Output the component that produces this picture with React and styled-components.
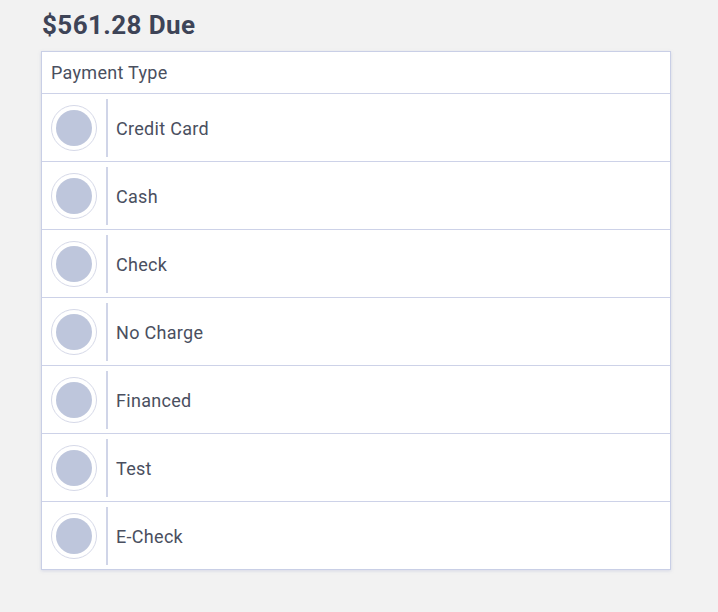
import styled, { createGlobalStyle } from "styled-components";

const GlobalStyle = createGlobalStyle`
  body {
    margin: 0;
    background: #f2f2f2;
    font-family: Roboto, "Liberation Sans", sans-serif;
  }
`;

const Page = styled.div`
  padding: 7px 47px 40px 41px;
`;

const Title = styled.h1`
  margin: 0 0 8px 1px;
  font-size: 26px;
  line-height: 36px;
  font-weight: 700;
  letter-spacing: 0.4px;
  color: #3e4457;
`;

const Table = styled.div`
  background: #fff;
  border: 1px solid #c9cfe6;
  box-shadow: 0 1px 3px rgba(160, 168, 210, 0.35);
`;

const Header = styled.div`
  height: 41px;
  padding-left: 9px;
  display: flex;
  align-items: center;
  font-size: 18px;
  letter-spacing: 0.3px;
  color: #4a4f60;
  border-bottom: 1px solid #cdd2e8;
`;

const Row = styled.label`
  height: 67px;
  display: flex;
  align-items: center;
  border-bottom: ${(p) => (p.$last ? "none" : "1px solid #cdd2e8")};
  cursor: pointer;
`;

const RadioCell = styled.div`
  align-self: stretch;
  display: flex;
  align-items: center;
  padding: 0 9px;
`;

const Radio = styled.span`
  width: 44px;
  height: 44px;
  border-radius: 50%;
  border: 1px solid #d6d9e8;
  background: #fff;
  display: flex;
  align-items: center;
  justify-content: center;
  &::after {
    content: "";
    width: 36px;
    height: 36px;
    border-radius: 50%;
    background: ${(p) => (p.$checked ? "#5b6ea8" : "#bec6dc")};
  }
`;

const Divider = styled.span`
  width: 2px;
  align-self: stretch;
  margin: 5px 0 4px;
  background: #d0d5e8;
`;

const Label = styled.span`
  padding: 1px 0 0 8px;
  font-size: 18px;
  letter-spacing: 0.3px;
  color: #4a4f60;
`;

const types = ["Credit Card", "Cash", "Check", "No Charge", "Financed", "Test", "E-Check"];

export default function App() {
  return (
    <>
      <GlobalStyle />
      <Page>
        <Title>$561.28 Due</Title>
        <Table>
          <Header>Payment Type</Header>
          {types.map((t, i) => (
            <Row key={t} $last={i === types.length - 1}>
              <RadioCell>
                <Radio />
              </RadioCell>
              <Divider />
              <Label>{t}</Label>
            </Row>
          ))}
        </Table>
      </Page>
    </>
  );
}
